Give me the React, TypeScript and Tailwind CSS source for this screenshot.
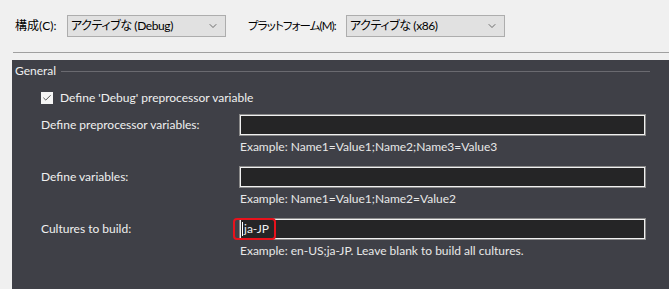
import { Check, ChevronDown } from 'lucide-react'

function Combo({ value }: { value: string }) {
  return (
    <div className="shrink-0 w-[159px] h-[22px] border border-[#adadad] bg-[#e1e1e1] flex items-center pl-[3px] pr-[6px] text-[12px] text-black">
      <span className="flex-1 truncate tracking-[-0.4px]">{value}</span>
      <ChevronDown size={12} strokeWidth={1.5} className="text-[#444]" />
    </div>
  )
}

function Field({
  label,
  example,
  value,
}: {
  label: string
  example: string
  value?: string
}) {
  return (
    <div className="flex">
      <div className="shrink-0 w-[227px] pl-[29px] h-[22px] flex items-center whitespace-nowrap">{label}</div>
      <div className="flex flex-col">
        <div className="relative w-[407px] h-[22px] border border-[#8a8a8a]">
          <div className="h-full border border-[#f0f0f0] bg-[#252526] flex items-center pl-[1px]">
            {value && (
              <>
                <span className="w-px h-[14px] bg-white" />
                <span className="ml-px text-[12px] text-[#f0f0f0]">{value}</span>
              </>
            )}
          </div>
          {value && (
            <span className="absolute left-[-7px] top-[-1px] w-[43px] h-[22px] rounded-[4px] border-2 border-[#e8121c]" />
          )}
        </div>
        <div className="mt-[3px] pl-px text-[12px] leading-[16px] text-[#e8e8e8] whitespace-nowrap">{example}</div>
      </div>
    </div>
  )
}

export default function App() {
  return (
    <div className="w-[669px] h-[289px] bg-[#f0f0f0] overflow-hidden flex flex-col text-[12px] font-['Lato','Noto_Sans_CJK_JP',sans-serif] [font-feature-settings:'palt']">
      <div className="flex items-center pt-[15px] h-[37px]">
        <span className="shrink-0 ml-[15px] w-[52px] text-black whitespace-nowrap">構成(C):</span>
        <Combo value="アクティブな (Debug)" />
        <span className="shrink-0 ml-[22px] w-[98px] text-black whitespace-nowrap text-[11.5px] tracking-[-0.9px]">プラットフォーム(M):</span>
        <Combo value="アクティブな (x86)" />
      </div>
      <div className="mt-[15px] ml-[13px] h-px bg-[#a0a0a0]" />
      <div className="mt-[7px] ml-[12px] flex-1 bg-[#3f4047] text-[#f0f0f0] flex flex-col">
        <div className="flex items-center h-[22px] pl-[3px]">
          <span>General</span>
          <div className="ml-[5px] mr-[19px] flex-1 h-px bg-[#6a6a70]" />
        </div>
        <div className="mt-[10px] flex items-center pl-[29px] h-[12px]">
          <span className="w-[12px] h-[12px] bg-[#f5f5f5] flex items-center justify-center">
            <Check size={10} strokeWidth={2} className="text-[#333]" />
          </span>
          <span className="ml-[7px]">Define 'Debug' preprocessor variable</span>
        </div>
        <div className="mt-[10px] flex flex-col gap-[11px]">
          <Field label="Define preprocessor variables:" example="Example: Name1=Value1;Name2;Name3=Value3" />
          <Field label="Define variables:" example="Example: Name1=Value1;Name2=Value2" />
          <Field label="Cultures to build:" example="Example: en-US;ja-JP. Leave blank to build all cultures." value="ja-JP" />
        </div>
      </div>
    </div>
  )
}
